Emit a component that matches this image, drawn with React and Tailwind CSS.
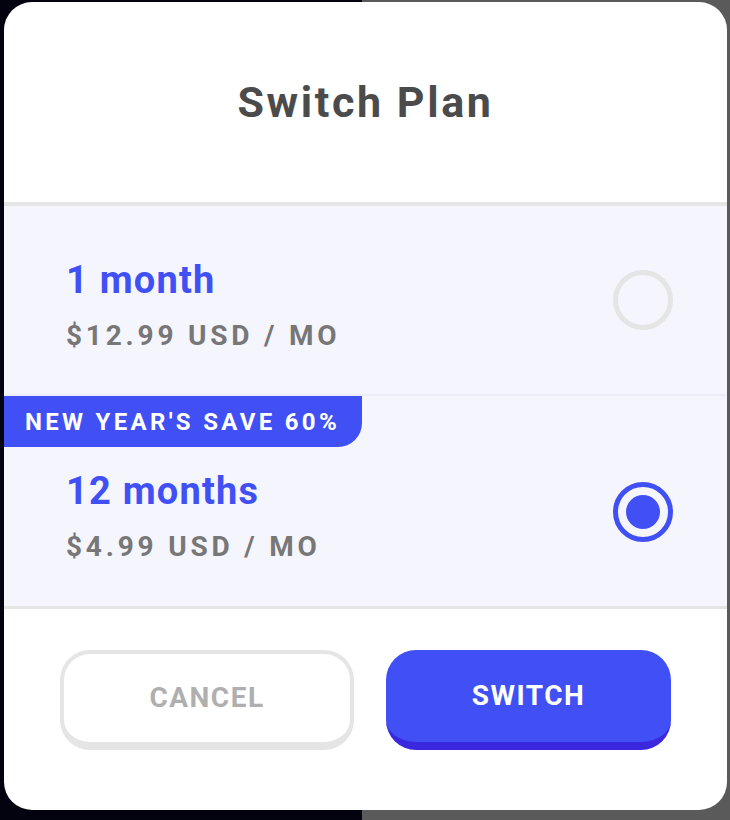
import { useState } from "react";

const plans = [
  { id: "1m", name: "1 month", price: "$12.99 USD / MO" },
  { id: "12m", name: "12 months", price: "$4.99 USD / MO", badge: "NEW YEAR'S SAVE 60%" },
];

function Radio({ checked }) {
  if (checked) {
    return (
      <div className="w-[60px] h-[60px] rounded-full border-[5px] border-[#4050f5] flex items-center justify-center">
        <div className="w-[34px] h-[34px] rounded-full bg-[#4050f5]"></div>
      </div>
    );
  }
  return <div className="w-[60px] h-[60px] rounded-full border-[5px] border-[#e5e5e5]"></div>;
}

function PlanText({ plan }) {
  return (
    <div className="flex flex-col">
      <div className="text-[38px] leading-[44px] font-bold tracking-[1.2px] text-[#4050f5]">{plan.name}</div>
      <div className="mt-[17px] text-[28px] leading-[34px] font-bold tracking-[3.8px] text-[#777777]">{plan.price}</div>
    </div>
  );
}

export default function App() {
  const [selected, setSelected] = useState("12m");

  return (
    <div className="w-[730px] h-[820px] pt-[2px] pl-[4px] bg-[linear-gradient(to_right,#03030f_362px,#5a5a5a_362px)] font-['Roboto',sans-serif]">
      <div className="w-[723px] h-[808px] rounded-[28px] bg-white overflow-hidden flex flex-col">
        {/* header */}
        <div className="h-[200px] flex items-center justify-center border-b-[4px] border-[#e5e5e5] box-content">
          <h1 className="text-[43px] font-bold tracking-[2.6px] text-[#4b4b4b]">Switch Plan</h1>
        </div>

        {/* 1 month */}
        <div
          onClick={() => setSelected("1m")}
          className="h-[188px] bg-[#f5f5fe] flex items-start justify-between pl-[62px] pr-[54px] border-b-[2px] border-[#ebebfa] box-content cursor-pointer"
        >
          <div className="pt-[52px]">
            <PlanText plan={plans[0]} />
          </div>
          <div className="mt-[64px]">
            <Radio checked={selected === "1m"} />
          </div>
        </div>

        {/* 12 months */}
        <div
          onClick={() => setSelected("12m")}
          className="h-[210px] bg-[#f5f5fe] flex flex-col border-b-[3px] border-[#e5e5e5] box-content cursor-pointer"
        >
          <div className="w-[358px] h-[51px] bg-[#4050f5] rounded-br-[24px] flex items-center pl-[21px]">
            <span className="text-[24px] font-bold tracking-[3.3px] text-white">{plans[1].badge}</span>
          </div>
          <div className="flex items-start justify-between pl-[62px] pr-[54px]">
            <div className="pt-[22px]">
              <PlanText plan={plans[1]} />
            </div>
            <div className="mt-[35px]">
              <Radio checked={selected === "12m"} />
            </div>
          </div>
        </div>

        {/* buttons */}
        <div className="flex gap-[32px] pl-[56px] pt-[41px]">
          <button className="w-[294px] h-[100px] rounded-[30px] border-[4px] border-b-[8px] border-[#e5e5e5] bg-white flex items-center justify-center">
            <span className="text-[28px] font-bold tracking-[1.5px] text-[#afafaf]">CANCEL</span>
          </button>
          <button className="w-[285px] h-[100px] rounded-[30px] border-b-[8px] border-[#3b27dd] bg-[#4050f5] flex items-center justify-center">
            <span className="text-[28px] font-bold tracking-[1.5px] text-white">SWITCH</span>
          </button>
        </div>
      </div>
    </div>
  );
}
